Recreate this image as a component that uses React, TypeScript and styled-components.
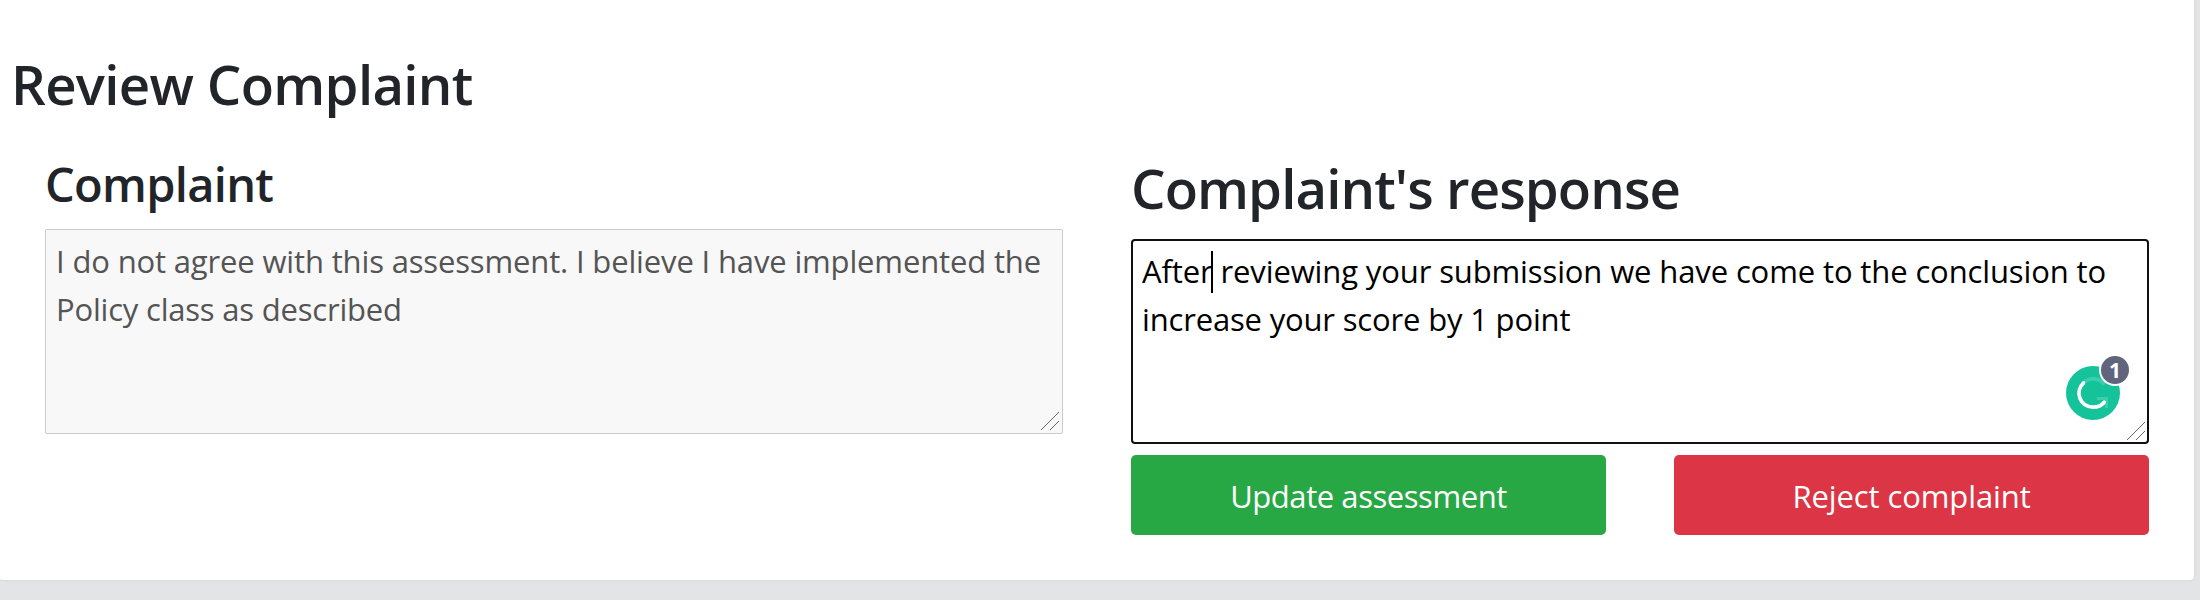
import React from 'react';
import styled, { createGlobalStyle } from 'styled-components';

const GlobalStyle = createGlobalStyle`
  *, *::before, *::after { box-sizing: border-box; }
  body {
    margin: 0;
    background: #e3e4e5;
    color: #212529;
    font-family: 'Open Sans', 'Noto Sans', sans-serif;
    overflow: hidden;
  }
`;

const Page = styled.div`
  height: 600px;
  padding-right: 4px;
`;

const Card = styled.main`
  height: 582px;
  padding: 51px 45px 0 11px;
  background: #fff;
  background-clip: padding-box;
  border: solid #dfdfdf;
  border-width: 0 2px 2px 0;
  border-radius: 0 0 6px 3px;
`;

const Heading = styled.h3<{ $small?: boolean; $spacing: number }>`
  margin: 0;
  height: ${(p) => (p.$small ? 58 : 67)}px;
  font-size: ${(p) => (p.$small ? 47 : 54.5)}px;
  line-height: ${(p) => (p.$small ? 58 : 67)}px;
  font-weight: 600;
  letter-spacing: ${(p) => p.$spacing}px;
  white-space: nowrap;
`;

const Columns = styled.div`
  display: grid;
  grid-template-columns: 1018px 1018px;
  column-gap: 68px;
  margin: 37px 0 0 34px;
`;

const Column = styled.section`
  min-width: 0;
`;

const TextBox = styled.div<{ $active?: boolean }>`
  position: relative;
  height: 205px;
  margin-top: ${(p) => (p.$active ? 17 : 16)}px;
  padding: ${(p) => (p.$active ? '6px 9px' : '7px 10px')};
  border: ${(p) => (p.$active ? '2px solid #101010' : '1px solid #cbcbcb')};
  border-radius: ${(p) => (p.$active ? 4 : 2)}px;
  background: ${(p) => (p.$active ? '#fff' : '#f8f8f8')};
  color: ${(p) => (p.$active ? '#000' : '#545454')};
  font-size: 31px;
  line-height: 48px;
`;

const Line = styled.div<{ $spacing: number }>`
  letter-spacing: ${(p) => p.$spacing}px;
  white-space: nowrap;
`;

const Caret = styled.span`
  position: relative;

  &::after {
    content: '';
    position: absolute;
    right: 0;
    top: 1px;
    width: 2px;
    height: 42px;
    background: #000;
  }
`;

const Grip = styled.svg<{ $inset: number }>`
  position: absolute;
  right: ${(p) => p.$inset}px;
  bottom: ${(p) => p.$inset}px;
  width: 18px;
  height: 18px;
`;

const Assistant = styled.div`
  position: absolute;
  right: 16px;
  bottom: 22px;
  width: 66px;
  height: 66px;
`;

const AssistantLogo = styled.svg`
  position: absolute;
  left: 1px;
  bottom: 0;
  width: 54px;
  height: 54px;
`;

const Count = styled.span`
  position: absolute;
  left: 34px;
  top: 0;
  width: 32px;
  height: 32px;
  border: 2px solid #fff;
  border-radius: 50%;
  background: #60657d;
  color: #fff;
  font-size: 21px;
  font-weight: 700;
  line-height: 28px;
  text-align: center;
`;

const Actions = styled.div`
  display: flex;
  justify-content: space-between;
  margin-top: 11px;
`;

const Button = styled.button<{ $tone: 'success' | 'danger'; $spacing: number }>`
  width: 475px;
  height: 80px;
  padding: 1px 0 0;
  border: 0;
  border-radius: 5px;
  background: ${(p) => (p.$tone === 'success' ? '#28a745' : '#dc3545')};
  color: #fff;
  font: 400 31px / 48px 'Open Sans', 'Noto Sans', sans-serif;
  letter-spacing: ${(p) => p.$spacing}px;
`;

function ResizeGrip({ inset }: { inset: number }) {
  return (
    <Grip $inset={inset} viewBox="0 0 18 18" fill="none" stroke="#555" strokeWidth="0.9">
      <path d="M0 18 18 0M9 18 18 9" />
    </Grip>
  );
}

export default function App() {
  return (
    <Page>
      <GlobalStyle />
      <Card>
        <Heading $spacing={-0.67}>Review Complaint</Heading>
        <Columns>
          <Column>
            <Heading $small $spacing={-0.7}>Complaint</Heading>
            <TextBox>
              <Line $spacing={-0.15}>I do not agree with this assessment. I believe I have implemented the</Line>
              <Line $spacing={-0.2}>Policy class as described</Line>
              <ResizeGrip inset={3} />
            </TextBox>
          </Column>
          <Column>
            <Heading $spacing={-0.9}>Complaint's response</Heading>
            <TextBox $active>
              <Line $spacing={-0.12}>
                <Caret>After</Caret> reviewing your submission we have come to the conclusion to
              </Line>
              <Line $spacing={-0.17}>increase your score by 1 point</Line>
              <Assistant>
                <AssistantLogo viewBox="0 0 54 54" fill="none">
                  <circle cx="27" cy="27" r="27" fill="#15c39a" />
                  <path d="M19 15.5a14 14 0 0 1 19.5 3" stroke="#3bceac" strokeWidth="4" />
                  <path d="M31 32.5h9.5V42" stroke="#3bceac" strokeWidth="3" />
                  <path
                    d="M17.6 16.8A14 14 0 0 0 27 41.2a14 14 0 0 0 11.2-5"
                    stroke="#fff"
                    strokeWidth="3.7"
                    strokeLinecap="round"
                  />
                </AssistantLogo>
                <Count>1</Count>
              </Assistant>
              <ResizeGrip inset={2} />
            </TextBox>
            <Actions>
              <Button $tone="success" $spacing={-0.44}>Update assessment</Button>
              <Button $tone="danger" $spacing={-0.1}>Reject complaint</Button>
            </Actions>
          </Column>
        </Columns>
      </Card>
    </Page>
  );
}
